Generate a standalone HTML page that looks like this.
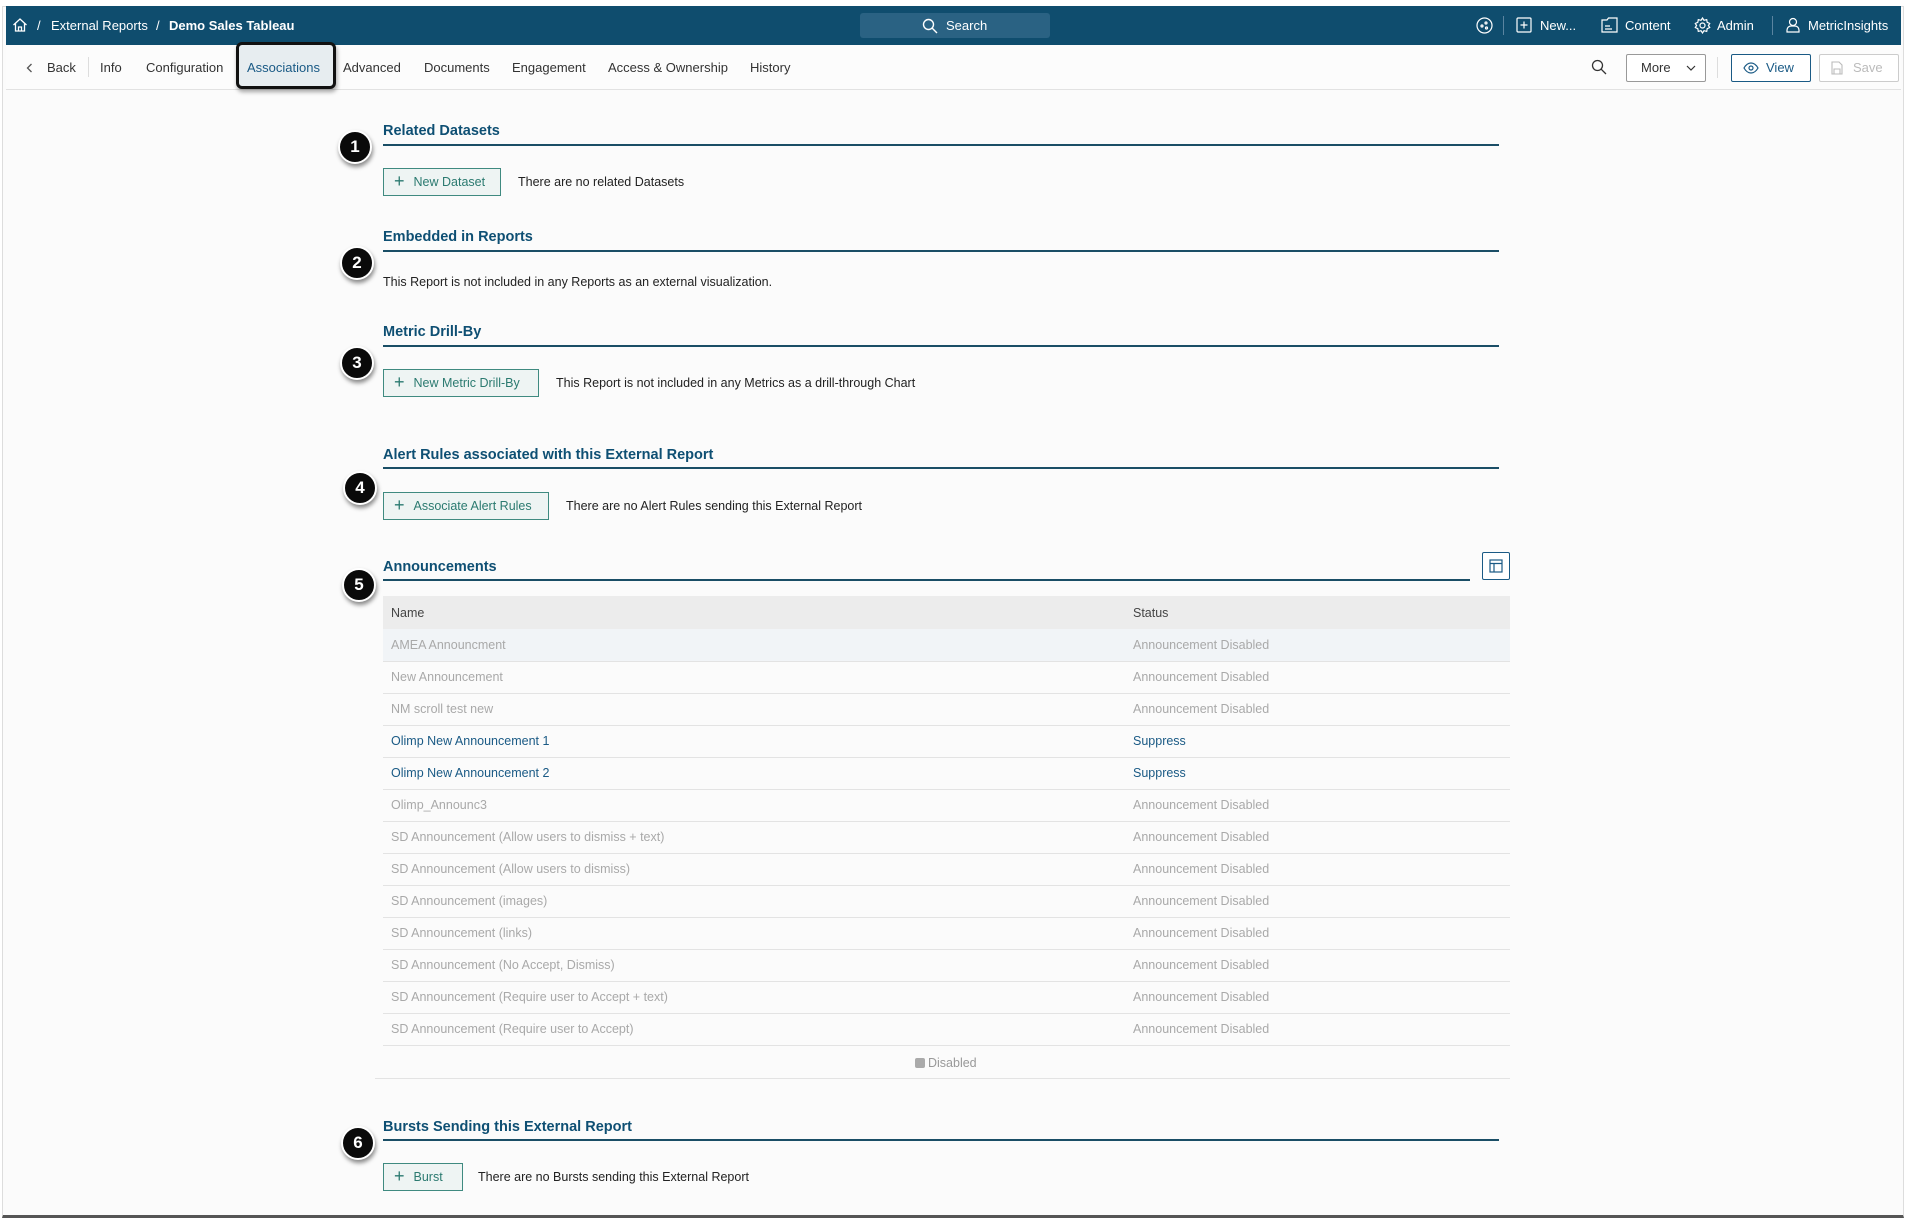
<!DOCTYPE html>
<html><head><meta charset="utf-8"><style>
*{box-sizing:border-box;margin:0;padding:0}
body{width:1908px;height:1220px;background:#fff;font-family:"Liberation Sans",sans-serif;position:relative;overflow:hidden;color:#222}
.a{position:absolute;white-space:nowrap}
#frame{position:absolute;left:2px;top:6px;width:1902px;height:1212px;background:#fbfbfb;border:1px solid #ddd;border-bottom:3px solid #555}
#top{position:absolute;left:6px;top:6px;width:1895px;height:39px;background:#0f4d6e;color:#fff;font-size:13px}
#top .a{top:12px}
#nav{position:absolute;left:6px;top:45px;width:1895px;height:45px;border-bottom:1px solid #e2e2e2;background:#fcfcfc;font-size:13px;color:#333}
#nav .a{top:15px}
.tt{position:absolute;font-size:14.5px;font-weight:bold;color:#0e4f73;left:383px}
.ln{position:absolute;left:383px;width:1116px;height:2px;background:#1a4e66}
.btn{position:absolute;left:383px;height:28px;border:1px solid #3f8a80;background:#eef4f3;color:#2b7a70;font-size:12.5px;padding:0 12px 0 10px;white-space:nowrap;line-height:26px}
.btn b{font-weight:normal;font-size:18px;margin-right:9px;display:inline-block;vertical-align:top;line-height:25px}
.tx{position:absolute;font-size:12.5px;color:#222;white-space:nowrap}
.bd{position:absolute;width:34px;height:34px;border-radius:50%;background:#0a0a0a;color:#fff;font-weight:bold;font-size:17px;text-align:center;line-height:30px;border:2px solid #fff;box-shadow:1px 3px 4px rgba(0,0,0,.45)}
table{position:absolute;left:383px;top:596px;width:1127px;border-collapse:collapse;font-size:12.5px}
th{background:#ececec;text-align:left;font-weight:normal;color:#444;height:33px;padding-left:8px}
td{height:32px;border-bottom:1px solid #e3e3e3;padding-left:8px;color:#a9a9a9}
tr.h td{background:#f1f4f7}
tr.l td{color:#1a5a85}
</style></head><body>
<div id="frame"></div>
<div id="top">
 <svg class="a" style="left:6px;top:11px" width="16" height="16" viewBox="0 0 16 16" fill="none" stroke="#fff" stroke-width="1.3"><path d="M1.5 8 8 2l6.5 6M3.5 6.5V14h9V6.5M6.5 14v-4h3v4"/></svg>
 <span class="a" style="left:31px">/</span>
 <span class="a" style="left:45px">External Reports</span>
 <span class="a" style="left:150px">/</span>
 <span class="a" style="left:163px;font-weight:bold">Demo Sales Tableau</span>
 <div class="a" style="left:854px;top:7px;width:190px;height:25px;background:#2a6283;border-radius:3px"></div>
 <svg class="a" style="left:916px;top:12px" width="16" height="16" viewBox="0 0 16 16" fill="none" stroke="#fff" stroke-width="1.4"><circle cx="6.5" cy="6.5" r="5"/><path d="M10.3 10.3 15 15"/></svg>
 <span class="a" style="left:940px">Search</span>
 <svg class="a" style="left:1470px;top:11px" width="17" height="17" viewBox="0 0 17 17" fill="none" stroke="#fff" stroke-width="1.2"><circle cx="8.5" cy="8.5" r="7.5"/><circle cx="6" cy="9" r="1"/><circle cx="10" cy="6" r="1"/><circle cx="10.5" cy="11" r="1"/></svg>
 <div class="a" style="left:1497px;top:10px;width:1px;height:19px;background:#5a84a0"></div>
 <svg class="a" style="left:1510px;top:11px" width="16" height="16" viewBox="0 0 16 16" fill="none" stroke="#fff" stroke-width="1.2"><rect x="1" y="1" width="14" height="14" rx="1"/><path d="M8 4.5v7M4.5 8h7"/></svg>
 <span class="a" style="left:1534px">New...</span>
 <svg class="a" style="left:1595px;top:11px" width="17" height="16" viewBox="0 0 17 16" fill="none" stroke="#fff" stroke-width="1.2"><path d="M1 3h5l1.5-2H16v14H1z"/><path d="M4 9h5M4 12h7"/></svg>
 <span class="a" style="left:1619px">Content</span>
 <svg class="a" style="left:1688px;top:11px" width="17" height="17" viewBox="0 0 17 17" fill="none" stroke="#fff" stroke-width="1.2"><circle cx="8.5" cy="8.5" r="2.5"/><path d="M8.5 1l1.5 2.3 2.7-.7.5 2.7 2.5 1.2-1.3 2 1.3 2-2.5 1.2-.5 2.7-2.7-.7-1.5 2.3-1.5-2.3-2.7.7-.5-2.7L1.3 10.5l1.3-2-1.3-2 2.5-1.2.5-2.7 2.7.7z"/></svg>
 <span class="a" style="left:1711px">Admin</span>
 <div class="a" style="left:1766px;top:10px;width:1px;height:19px;background:#5a84a0"></div>
 <svg class="a" style="left:1779px;top:11px" width="16" height="16" viewBox="0 0 16 16" fill="none" stroke="#fff" stroke-width="1.2"><circle cx="8" cy="5" r="3.5"/><path d="M2 15v-2a4 4 0 0 1 4-4h4a4 4 0 0 1 4 4v2z"/></svg>
 <span class="a" style="left:1802px">MetricInsights</span>
</div>
<div id="nav">
 <svg class="a" style="left:20px;top:18px" width="7" height="10" viewBox="0 0 7 10" fill="none" stroke="#555" stroke-width="1.3"><path d="M5.5 1 1.5 5l4 4"/></svg>
 <span class="a" style="left:41px">Back</span>
 <div class="a" style="left:82px;top:12px;width:1px;height:20px;background:#ddd"></div>
 <span class="a" style="left:94px">Info</span>
 <span class="a" style="left:140px">Configuration</span>
 <div class="a" style="left:230px;top:-3px;width:100px;height:47px;background:#e7edf0;border:3px solid #111;border-radius:6px;box-shadow:1px 3px 4px rgba(0,0,0,.35)"></div>
 <span class="a" style="left:241px;color:#1a5a85">Associations</span>
 <span class="a" style="left:337px">Advanced</span>
 <span class="a" style="left:418px">Documents</span>
 <span class="a" style="left:506px">Engagement</span>
 <span class="a" style="left:602px">Access &amp; Ownership</span>
 <span class="a" style="left:744px">History</span>
 <svg class="a" style="left:1585px;top:14px" width="16" height="16" viewBox="0 0 16 16" fill="none" stroke="#333" stroke-width="1.3"><circle cx="6.5" cy="6.5" r="5"/><path d="M10.3 10.3 15 15"/></svg>
 <div class="a" style="left:1620px;top:9px;width:80px;height:28px;border:1px solid #999;border-radius:2px;background:#fff"></div>
 <span class="a" style="left:1635px">More</span>
 <svg class="a" style="left:1680px;top:20px" width="10" height="6" viewBox="0 0 10 6" fill="none" stroke="#333" stroke-width="1.2"><path d="M1 1l4 4 4-4"/></svg>
 <div class="a" style="left:1711px;top:12px;width:1px;height:21px;background:#ddd"></div>
 <div class="a" style="left:1725px;top:9px;width:80px;height:28px;border:1px solid #1a5a85;border-radius:2px;background:#fff"></div>
 <svg class="a" style="left:1737px;top:17px" width="16" height="12" viewBox="0 0 16 12" fill="none" stroke="#1a5a85" stroke-width="1.2"><path d="M1 6c2-3.5 4.5-5 7-5s5 1.5 7 5c-2 3.5-4.5 5-7 5S3 9.5 1 6z"/><circle cx="8" cy="6" r="2"/></svg>
 <span class="a" style="left:1760px;color:#1a5a85">View</span>
 <div class="a" style="left:1813px;top:9px;width:80px;height:28px;border:1px solid #ccc;border-radius:2px;background:#fff"></div>
 <svg class="a" style="left:1825px;top:16px" width="12" height="14" viewBox="0 0 12 14" fill="none" stroke="#bbb" stroke-width="1.1"><path d="M1 1h7l3 3v9H1z"/><path d="M3 13V8h6v5"/></svg>
 <span class="a" style="left:1847px;color:#bbb">Save</span>
</div>

<div class="tt" style="top:123px">Related Datasets</div><div class="ln" style="top:144px"></div>
<div class="bd" style="left:338px;top:130px">1</div>
<div class="btn" style="top:168px;width:118px"><b>+</b>New Dataset</div>
<div class="tx" style="left:518px;top:175px">There are no related Datasets</div>

<div class="tt" style="top:229px">Embedded in Reports</div><div class="ln" style="top:250px"></div>
<div class="bd" style="left:340px;top:246px">2</div>
<div class="tx" style="left:383px;top:275px">This Report is not included in any Reports as an external visualization.</div>

<div class="tt" style="top:324px">Metric Drill-By</div><div class="ln" style="top:345px"></div>
<div class="bd" style="left:340px;top:346px">3</div>
<div class="btn" style="top:369px;width:156px"><b>+</b>New Metric Drill-By</div>
<div class="tx" style="left:556px;top:376px">This Report is not included in any Metrics as a drill-through Chart</div>

<div class="tt" style="top:447px">Alert Rules associated with this External Report</div><div class="ln" style="top:467px"></div>
<div class="bd" style="left:343px;top:471px">4</div>
<div class="btn" style="top:492px;width:166px"><b>+</b>Associate Alert Rules</div>
<div class="tx" style="left:566px;top:499px">There are no Alert Rules sending this External Report</div>

<div class="tt" style="top:559px">Announcements</div><div class="ln" style="top:579px;width:1087px"></div>
<div class="a" style="left:1482px;top:552px;width:28px;height:28px;border:1px solid #1a5a85;border-radius:2px;background:#fff"></div>
<svg class="a" style="left:1489px;top:559px" width="14" height="14" viewBox="0 0 14 14" fill="none" stroke="#1a5a85" stroke-width="1.2"><rect x="1" y="1" width="12" height="12"/><path d="M1 4.5h12M5 4.5V13"/></svg>
<div class="bd" style="left:342px;top:568px">5</div>
<table>
<tr><th style="width:742px">Name</th><th>Status</th></tr>
<tr class="h"><td>AMEA Announcment</td><td>Announcement Disabled</td></tr>
<tr><td>New Announcement</td><td>Announcement Disabled</td></tr>
<tr><td>NM scroll test new</td><td>Announcement Disabled</td></tr>
<tr class="l"><td>Olimp New Announcement 1</td><td>Suppress</td></tr>
<tr class="l"><td>Olimp New Announcement 2</td><td>Suppress</td></tr>
<tr><td>Olimp_Announc3</td><td>Announcement Disabled</td></tr>
<tr><td>SD Announcement (Allow users to dismiss + text)</td><td>Announcement Disabled</td></tr>
<tr><td>SD Announcement (Allow users to dismiss)</td><td>Announcement Disabled</td></tr>
<tr><td>SD Announcement (images)</td><td>Announcement Disabled</td></tr>
<tr><td>SD Announcement (links)</td><td>Announcement Disabled</td></tr>
<tr><td>SD Announcement (No Accept, Dismiss)</td><td>Announcement Disabled</td></tr>
<tr><td>SD Announcement (Require user to Accept + text)</td><td>Announcement Disabled</td></tr>
<tr><td>SD Announcement (Require user to Accept)</td><td>Announcement Disabled</td></tr>
</table>
<div class="a" style="left:915px;top:1058px;width:10px;height:10px;background:#aaa;border-radius:2px"></div>
<div class="tx" style="left:928px;top:1056px;color:#999">Disabled</div>
<div class="a" style="left:375px;top:1078px;width:1135px;height:1px;background:#e3e3e3"></div>

<div class="tt" style="top:1119px">Bursts Sending this External Report</div><div class="ln" style="top:1139px"></div>
<div class="bd" style="left:341px;top:1126px">6</div>
<div class="btn" style="top:1163px;width:80px"><b>+</b>Burst</div>
<div class="tx" style="left:478px;top:1170px">There are no Bursts sending this External Report</div>
</body></html>
